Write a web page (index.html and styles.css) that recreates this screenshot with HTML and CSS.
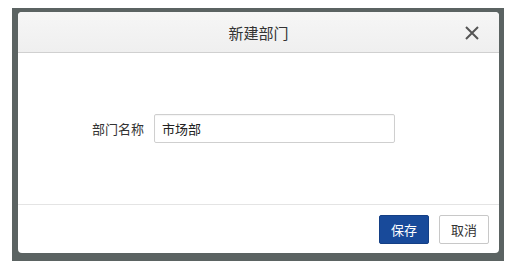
FILE: index.html
```html
<!DOCTYPE html>
<html lang="zh-CN">
<head>
<meta charset="utf-8">
<title>新建部门</title>
<link rel="stylesheet" href="styles.css">
</head>
<body>
<div class="backdrop">
  <div class="dialog">
    <div class="dialog-header">
      <span class="dialog-title">新建部门</span>
      <span class="close-btn">
        <svg width="14" height="14" viewBox="0 0 14 14"><path d="M1 1 L13 13 M13 1 L1 13" stroke="#555" stroke-width="2" fill="none"/></svg>
      </span>
    </div>
    <div class="dialog-body">
      <label class="field-label">部门名称</label>
      <div class="field-input">市场部</div>
    </div>
    <div class="dialog-footer">
      <button class="btn btn-primary">保存</button>
      <button class="btn btn-default">取消</button>
    </div>
  </div>
</div>
</body>
</html>
```
FILE: styles.css
```css
html, body {
  margin: 0;
  padding: 0;
  background: #ffffff;
  font-family: "Noto Sans CJK SC", "Noto Sans", sans-serif;
}
.backdrop {
  margin: 8px 0 0 12px;
  width: 492px;
  height: 253px;
  box-sizing: border-box;
  padding: 4px 5px 8px 6px;
  background: #5b6362;
}
.dialog {
  width: 481px;
  height: 241px;
  background: #ffffff;
  border-radius: 4px;
  display: flex;
  flex-direction: column;
  overflow: hidden;
}
.dialog-header {
  height: 41px;
  box-sizing: border-box;
  flex: none;
  display: flex;
  align-items: center;
  justify-content: center;
  position: relative;
  background: linear-gradient(#f6f6f6, #efefef);
  border-bottom: 1px solid #d0d0d0;
}
.dialog-title {
  font-size: 15px;
  color: #333;
  line-height: 20px;
  margin-top: 1px;
}
.close-btn {
  position: absolute;
  right: 20px;
  top: 14px;
  width: 14px;
  height: 14px;
  display: flex;
}
.dialog-body {
  flex: 1;
  display: flex;
  align-items: center;
  padding-left: 74px;
}
.field-label {
  font-size: 13px;
  color: #333;
  margin-right: 10px;
  line-height: 18px;
}
.field-input {
  width: 241px;
  height: 29px;
  box-sizing: border-box;
  border: 1px solid #cfcfcf;
  border-radius: 2px;
  padding: 0 7px;
  font-size: 13px;
  color: #222;
  line-height: 27px;
  box-shadow: inset 0 1px 1px rgba(0,0,0,0.04);
}
.dialog-footer {
  height: 49px;
  box-sizing: border-box;
  flex: none;
  border-top: 1px solid #e4e4e4;
  display: flex;
  justify-content: flex-end;
  align-items: center;
  gap: 10px;
  padding: 0 10px;
}
.btn {
  width: 50px;
  height: 29px;
  box-sizing: border-box;
  font-family: inherit;
  font-size: 13px;
  border-radius: 2px;
  padding: 0;
  line-height: 27px;
}
.btn-primary {
  background: #184a9a;
  border: 1px solid #143f85;
  color: #ffffff;
}
.btn-default {
  background: #ffffff;
  border: 1px solid #c8c8c8;
  color: #333;
}
```
